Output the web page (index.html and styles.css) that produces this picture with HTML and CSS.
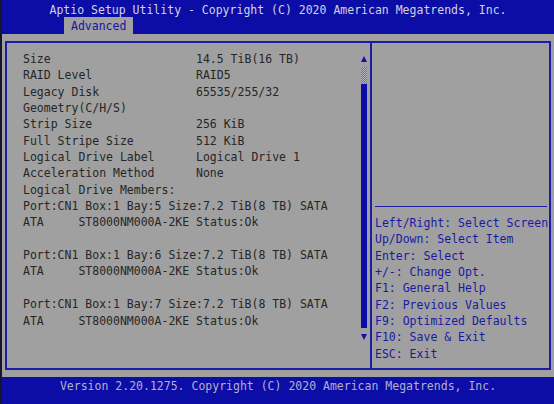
FILE: index.html
```html
<!DOCTYPE html>
<html lang="en">
<head>
    <meta charset="UTF-8">
    <meta name="viewport" content="width=device-width, initial-scale=1.0">
    <title>Aptio Setup Utility</title>
    <link rel="stylesheet" href="styles.css">
</head>
<body>
    <div class="screen">
        <header class="topbar">
            <div class="title">Aptio Setup Utility - Copyright (C) 2020 American Megatrends, Inc.</div>
            <nav class="tabs"><span class="tab">Advanced</span></nav>
        </header>

        <main class="body">
            <div class="frame">
                <!-- Logical drive details -->
                <section class="info">
                    <div class="rows">
                        <div class="row"><span class="label">Size</span><span>14.5 TiB(16 TB)</span></div>
                        <div class="row"><span class="label">RAID Level</span><span>RAID5</span></div>
                        <div class="row"><span class="label">Legacy Disk</span><span>65535/255/32</span></div>
                        <div class="row"><span class="label">Geometry(C/H/S)</span></div>
                        <div class="row"><span class="label">Strip Size</span><span>256 KiB</span></div>
                        <div class="row"><span class="label">Full Stripe Size</span><span>512 KiB</span></div>
                        <div class="row"><span class="label">Logical Drive Label</span><span>Logical Drive 1</span></div>
                        <div class="row"><span class="label">Acceleration Method</span><span>None</span></div>
                        <div class="row">Logical Drive Members:</div>
                        <div class="row">Port:CN1 Box:1 Bay:5 Size:7.2 TiB(8 TB) SATA</div>
                        <div class="row">ATA     ST8000NM000A-2KE Status:Ok</div>
                        <div class="row"> </div>
                        <div class="row">Port:CN1 Box:1 Bay:6 Size:7.2 TiB(8 TB) SATA</div>
                        <div class="row">ATA     ST8000NM000A-2KE Status:Ok</div>
                        <div class="row"> </div>
                        <div class="row">Port:CN1 Box:1 Bay:7 Size:7.2 TiB(8 TB) SATA</div>
                        <div class="row">ATA     ST8000NM000A-2KE Status:Ok</div>
                    </div>
                    <div class="scrollbar">
                        <div class="arrow"><span class="arrow-up"></span></div>
                        <div class="track"><div class="thumb"></div></div>
                        <div class="arrow"><span class="arrow-down"></span></div>
                    </div>
                </section>

                <!-- Key help -->
                <aside class="help">
                    <div class="rule"></div>
                    <ul class="keys">
                        <li>Left/Right: Select Screen</li>
                        <li>Up/Down: Select Item</li>
                        <li>Enter: Select</li>
                        <li>+/-: Change Opt.</li>
                        <li>F1: General Help</li>
                        <li>F2: Previous Values</li>
                        <li>F9: Optimized Defaults</li>
                        <li>F10: Save &amp; Exit</li>
                        <li>ESC: Exit</li>
                    </ul>
                </aside>
            </div>
        </main>

        <footer class="bottombar">Version 2.20.1275. Copyright (C) 2020 American Megatrends, Inc.</footer>
    </div>
</body>
</html>
```

FILE: styles.css
```css
body {
    margin: 0;
    font-family: "DejaVu Sans Mono", monospace;
    font-size: 11.5px;
    line-height: 16.35px;
    background-color: #a0a0a0;
}
.screen {
    width: 554px;
    height: 404px;
    box-sizing: border-box;
    border-left: 2px solid #15152c;
    display: flex;
    flex-direction: column;
    background-color: #a0a0a0;
    color: #262626;
}
.topbar {
    height: 34px;
    background-color: #0c0ca6;
    color: #d2d2e2;
}
.title {
    height: 17px;
    padding-top: 2px;
    box-sizing: border-box;
    text-align: center;
}
.tabs {
    padding-left: 62px;
}
.tab {
    display: inline-block;
    height: 17px;
    line-height: 18px;
    padding: 0 7px;
    background-color: #a0a0a0;
    color: #1616a2;
}
.body {
    flex: 1;
    padding: 7px 3px;
    box-sizing: border-box;
}
.frame {
    height: 100%;
    box-sizing: border-box;
    border: 2px solid #1c1ca4;
    display: flex;
}
.info {
    width: 365px;
    box-sizing: border-box;
    border-right: 2px solid #1c1ca4;
    padding: 8px 3px 0 16px;
    display: flex;
}
.rows {
    flex: 1;
}
.row {
    display: flex;
    height: 16.35px;
    white-space: pre;
}
.label {
    width: 173px;
}
.scrollbar {
    width: 6px;
    display: flex;
    flex-direction: column;
}
.arrow {
    height: 16.35px;
    display: flex;
    align-items: center;
    justify-content: center;
}
.arrow-up {
    border-left: 3px solid transparent;
    border-right: 3px solid transparent;
    border-bottom: 6px solid #1010a4;
}
.arrow-down {
    border-left: 3px solid transparent;
    border-right: 3px solid transparent;
    border-top: 6px solid #1010a4;
}
.track {
    height: 261px;
    background-color: #0c0ca6;
}
.thumb {
    height: 17px;
    background: repeating-conic-gradient(#6c6cb4 0 25%, #b4b4c0 0 50%) 0 0 / 2px 2px;
}
.help {
    flex: 1;
    display: flex;
    flex-direction: column;
    padding: 0 2px 6px 3px;
    min-width: 0;
}
.rule {
    margin-top: auto;
    margin-bottom: 8px;
    height: 1px;
    background-color: #1c1ca4;
}
.keys {
    list-style: none;
    margin: 0;
    padding: 0;
    color: #1a1aa0;
    white-space: nowrap;
}
.keys li {
    height: 16.35px;
}
.bottombar {
    height: 27px;
    padding-top: 1px;
    box-sizing: border-box;
    background-color: #0c0ca6;
    color: #b2b2cc;
    text-align: center;
}
```
